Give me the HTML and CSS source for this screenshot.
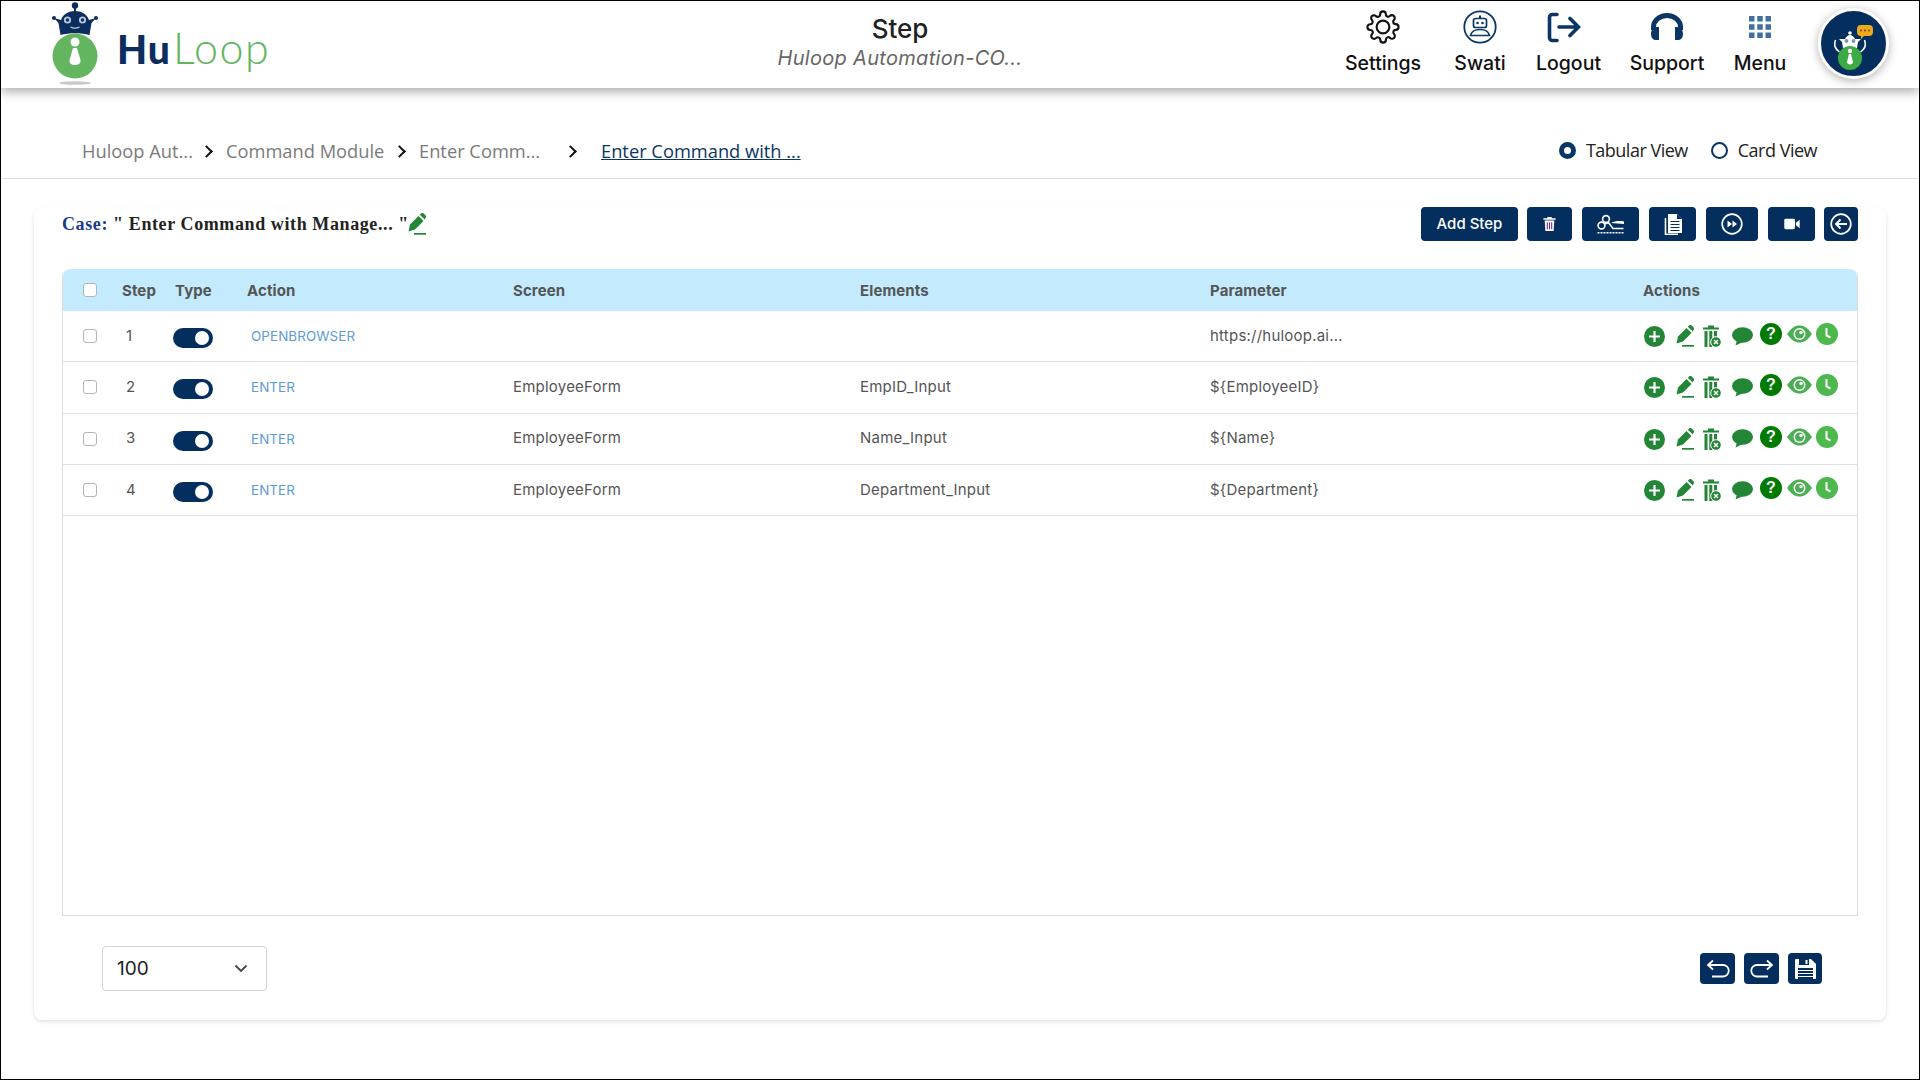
FILE: index.html
```html
<!DOCTYPE html>
<html lang="en">
<head>
<meta charset="utf-8">
<title>Step</title>
<link rel="stylesheet" href="styles.css">
</head>
<body>
<svg class="defs" aria-hidden="true">
  <symbol id="i-plus" viewBox="0 0 21 21"><circle cx="10.5" cy="10.5" r="10.5" fill="#238636"/><path d="M10.5 5v11M5 10.5h11" stroke="#fff" stroke-width="2.2"/></symbol>
  <symbol id="i-pen" viewBox="0 0 18 22"><path d="M.5 18.500 2 11.500 10.500 3l5 5L7 16.500z" fill="#238636"/><path d="M11.800 1.800 13 .6a2 2 0 0 1 2.800 0l1.600 1.600a2 2 0 0 1 0 2.800L16.800 6.600z" fill="#238636"/><rect x="6" y="20" width="12" height="1.700" fill="#238636"/></symbol>
  <symbol id="i-trash" viewBox="0 0 18 22"><path d="M5 .5h6v2h5v2H0v-2h5z" fill="#238636"/><path d="M1.500 6h3v16h-3zM6.300 6h3v16h-3zM11 6h3v7h-3z" fill="#238636"/><circle cx="13" cy="17" r="5.300" fill="#238636" stroke="#fff"/><path d="m11 15 4 4m0-4-4 4" stroke="#fff" stroke-width="1.500"/></symbol>
  <symbol id="i-chat" viewBox="0 0 21 19"><ellipse cx="10.500" cy="8" rx="10.500" ry="7.800" fill="#238636"/><path d="M5 13 3.500 18.500 11 15z" fill="#238636"/></symbol>
  <symbol id="i-eye" viewBox="0 0 25 18"><path d="M0 9C4 3 8 .5 12.500.5S21 3 25 9c-4 6-8 8.500-12.500 8.500S4 15 0 9z" fill="#4cae54"/><circle cx="12.500" cy="9" r="6" fill="#fff"/><circle cx="12.500" cy="9" r="4.500" fill="#4cae54"/><circle cx="14" cy="7.500" r="1.700" fill="#fff"/></symbol>
  <symbol id="i-clock" viewBox="0 0 22 22"><circle cx="11" cy="11" r="11" fill="#4db84e"/><path d="M10.500 5v7.500l4 2" fill="none" stroke="#fff" stroke-width="2"/></symbol>
</svg>
<div class="page">
  <header class="topbar">
    <a class="brand">
      <svg class="brand-mark" viewBox="0 0 50 85" aria-hidden="true">
        <circle cx="25" cy="4.500" r="3.200" fill="#0c2e5e"/><rect x="24" y="6" width="2" height="5" fill="#0c2e5e"/>
        <circle cx="4" cy="17" r="2" fill="#0c2e5e"/><circle cx="46" cy="17" r="2" fill="#0c2e5e"/>
        <path d="M4 17l7 2c2-6 8-9 14-9s12 3 14 9l7-2-4.500 5L39.500 34C31 31.500 19 31.500 10.500 34L8.500 22z" fill="#0c2e5e"/>
        <circle cx="17.500" cy="19" r="3.600" fill="#b9c6d8"/><circle cx="32.500" cy="19" r="3.600" fill="#b9c6d8"/>
        <circle cx="17.500" cy="19" r="1.700" fill="#0c2e5e"/><circle cx="32.500" cy="19" r="1.700" fill="#0c2e5e"/>
        <path d="M20.500 26c3 1.500 6 1.500 9 0" fill="none" stroke="#b9c6d8" stroke-width="1.300"/>
        <circle cx="25" cy="55" r="22.500" fill="#63b560"/>
        <circle cx="25" cy="41" r="4.500" fill="#fff"/>
        <path d="M23 47h4l3.500 12c.5 3-2 5-5.500 5s-6-2-5.500-5z" fill="#fff"/>
        <ellipse cx="25" cy="82" rx="16" ry="1.800" fill="#c9c9c9"/>
      </svg>
      <span class="brand-name"><b>Hu</b><span>Loop</span></span>
    </a>
    <div class="title">
      <h1>Step</h1>
      <p>Huloop Automation-CO...</p>
    </div>
    <nav class="nav">
      <a class="nav-item w-settings">
        <svg class="nav-icon" viewBox="0 0 24 24" fill="none" stroke="#111" stroke-width="1.500"><circle cx="12" cy="12" r="4.500"/><path d="M19.400 15a1.650 1.650 0 0 0 .33 1.820l.06.06a2 2 0 0 1 0 2.830 2 2 0 0 1-2.830 0l-.06-.06a1.650 1.650 0 0 0-1.820-.33 1.650 1.650 0 0 0-1 1.510V21a2 2 0 0 1-2 2 2 2 0 0 1-2-2v-.09A1.650 1.650 0 0 0 9 19.400a1.650 1.650 0 0 0-1.820.33l-.06.06a2 2 0 0 1-2.830 0 2 2 0 0 1 0-2.830l.06-.06a1.650 1.650 0 0 0 .33-1.820 1.650 1.650 0 0 0-1.510-1H3a2 2 0 0 1-2-2 2 2 0 0 1 2-2h.09A1.650 1.650 0 0 0 4.600 9a1.650 1.650 0 0 0-.33-1.820l-.06-.06a2 2 0 0 1 0-2.830 2 2 0 0 1 2.830 0l.06.06a1.650 1.650 0 0 0 1.820.33H9a1.650 1.650 0 0 0 1-1.510V3a2 2 0 0 1 2-2 2 2 0 0 1 2 2v.09a1.650 1.650 0 0 0 1 1.510 1.650 1.650 0 0 0 1.820-.33l.06-.06a2 2 0 0 1 2.830 0 2 2 0 0 1 0 2.830l-.06.06a1.650 1.650 0 0 0-.33 1.820V9a1.650 1.650 0 0 0 1.510 1H21a2 2 0 0 1 2 2 2 2 0 0 1-2 2h-.09a1.650 1.650 0 0 0-1.510 1z"/></svg>
        <span>Settings</span>
      </a>
      <a class="nav-item w-swati">
        <svg class="nav-icon" viewBox="0 0 34 34" fill="none"><circle cx="17" cy="17" r="15.700" stroke="#0b3564" stroke-width="1.800"/><rect x="10.500" y="8.500" width="13" height="9" rx="2" stroke="#0b3564" stroke-width="1.700"/><rect x="16" y="5.500" width="2" height="3" fill="#0b3564"/><circle cx="14.500" cy="13" r="1.300" fill="#0b3564"/><circle cx="19.500" cy="13" r="1.300" fill="#0b3564"/><path d="M7.500 25.500C8.500 21 12 19.500 17 19.500s8.500 1.500 9.500 6z" stroke="#0b3564" stroke-width="1.700"/></svg>
        <span>Swati</span>
      </a>
      <a class="nav-item w-logout">
        <svg class="nav-icon nudge-left" viewBox="0 0 34 34" fill="none" stroke="#0b3564" stroke-width="3.600" stroke-linecap="round"><path d="M10 4.500H5.500a3 3 0 0 0-3 3v20a3 3 0 0 0 3 3H10"/><path d="M12 17h19M23 8.500 31.500 17 23 25.500"/></svg>
        <span>Logout</span>
      </a>
      <a class="nav-item w-support">
        <svg class="nav-icon" viewBox="0 0 34 34"><path d="M3.500 20v-3a13.500 11.500 0 0 1 27 0v3" fill="none" stroke="#0b3564" stroke-width="5"/><path d="M1 24c0-4 2.500-7 5-7h3v13H6c-2.500 0-5-2-5-6zM33 24c0-4-2.500-7-5-7h-3v13h3c2.500 0 5-2 5-6z" fill="#0b3564"/></svg>
        <span>Support</span>
      </a>
      <a class="nav-item w-menu">
        <svg class="nav-icon" viewBox="0 0 34 34" fill="#40709f"><rect x="6" y="6" width="5.500" height="5.500"/><rect x="14.250" y="6" width="5.500" height="5.500"/><rect x="22.500" y="6" width="5.500" height="5.500"/><rect x="6" y="14.250" width="5.500" height="5.500"/><rect x="14.250" y="14.250" width="5.500" height="5.500"/><rect x="22.500" y="14.250" width="5.500" height="5.500"/><rect x="6" y="22.500" width="5.500" height="5.500"/><rect x="14.250" y="22.500" width="5.500" height="5.500"/><rect x="22.500" y="22.500" width="5.500" height="5.500"/></svg>
        <span>Menu</span>
      </a>
      <div class="avatar">
        <svg viewBox="0 0 65 65" aria-hidden="true">
          <path d="M40 14h8a4 4 0 0 1 4 4v3a4 4 0 0 1-4 4h-5l-3 3v-3a4 4 0 0 1-4-4v-3a4 4 0 0 1 4-4z" fill="#eea81c"/>
          <circle cx="40" cy="19.500" r="1" fill="#6b4a00"/><circle cx="44" cy="19.500" r="1" fill="#6b4a00"/><circle cx="48" cy="19.500" r="1" fill="#6b4a00"/>
          <circle cx="29" cy="22" r="1.800" fill="#fff"/><path d="M18 28h6c1-2 3-4 5-4s4 2 5 4h6l-3 3-1 6H22l-1-6z" fill="#fff"/>
          <circle cx="25.500" cy="30" r="1.900" fill="#7d95b5"/><circle cx="32.500" cy="30" r="1.900" fill="#7d95b5"/>
          <path d="M14.500 29c-2 5-1 8 4 12M43.500 29c2 5 1 8-4 12" fill="none" stroke="#fff" stroke-width="1.600"/>
          <circle cx="29" cy="47" r="12" fill="#3cab44"/>
          <circle cx="29" cy="40" r="2.200" fill="#fff"/><path d="M28 43h2l2 8c0 1.500-1.300 2.500-3 2.500s-3-1-3-2.500z" fill="#fff"/>
        </svg>
      </div>
    </nav>
  </header>

  <div class="crumbbar">
    <ol class="crumbs">
      <li class="c1">Huloop Aut...</li>
      <li class="c2">Command Module</li>
      <li class="c3">Enter Comm...</li>
      <li class="c4"><a>Enter Command with ...</a></li>
    </ol>
    <div class="views">
      <label class="radio is-on"><i></i>Tabular View</label>
      <label class="radio"><i></i>Card View</label>
    </div>
  </div>

  <main class="card">
    <div class="toolbar">
      <h2 class="case"><span>Case:</span> " Enter Command with Manage... "<svg class="case-pen"><use href="#i-pen"/></svg></h2>
      <div class="actions">
        <button class="btn btn-add">Add Step</button>
        <button class="btn b-del"><svg width="13" height="14" viewBox="0 0 14 16"><path d="M4.500 0h5v1.500H14V3H0V1.500h4.500z" fill="#fff"/><path d="M1.500 4h11l-.8 12H2.300z" fill="#fff"/><path d="M4.500 6v8M7 6v8M9.500 6v8" stroke="#7a2f9c" stroke-width="1.300"/></svg></button>
        <button class="btn b-cut"><svg width="28" height="20" viewBox="0 0 28 20" fill="none" stroke="#fff"><circle cx="9" cy="5" r="3.400" stroke-width="1.600"/><circle cx="4.500" cy="11.500" r="3.400" stroke-width="1.600"/><path d="M11 8 16 14.500H26.500M7.500 10 12 8.500" stroke-width="1.600"/><path d="M14 9c4-2 8-2.500 13-1.500V10z" fill="#fff" stroke="none"/><path d="M.5 18.800h27" stroke-width="1.500" stroke-dasharray="2 1"/></svg></button>
        <button class="btn b-doc"><svg width="18" height="21" viewBox="0 0 18 21"><path d="M1.500 4v16.200H14" fill="none" stroke="#fff" stroke-width="1.600"/><path d="M4 0h9l5 5v14H4z" fill="#fff"/><path d="M13 0v5h5z" fill="#042e5e"/><path d="M6.500 7.500h9M6.500 10.500h9M6.500 13.500h9M6.500 16.500h9" stroke="#042e5e" stroke-width="1.100"/></svg></button>
        <button class="btn b-run"><svg width="22" height="22" viewBox="0 0 22 22"><circle cx="11" cy="11" r="9.800" fill="none" stroke="#fff" stroke-width="1.700"/><path d="M6.500 7.500 11 11l-4.500 3.500zM11.500 7.500 16 11l-4.500 3.500z" fill="#fff"/></svg></button>
        <button class="btn b-rec"><svg width="16" height="12" viewBox="0 0 18 14"><rect y="1" width="12.500" height="12" rx="1.500" fill="#fff"/><path d="M13.500 5.500 18 2v10l-4.500-3.500z" fill="#fff"/></svg></button>
        <button class="btn b-back"><svg width="22" height="22" viewBox="0 0 22 22" fill="none" stroke="#fff"><circle cx="11" cy="11" r="9.800" stroke-width="1.700"/><path d="M17 11H6M10.500 6.500 6 11l4.500 4.500" stroke-width="1.800"/></svg></button>
      </div>
    </div>

    <div class="table-wrap">
      <table class="steps">
        <colgroup><col class="c-check"><col class="c-step"><col class="c-type"><col class="c-action"><col class="c-screen"><col class="c-elem"><col class="c-param"><col class="c-acts"></colgroup>
        <thead>
          <tr><th class="cell-check"><input type="checkbox"></th><th>Step</th><th>Type</th><th>Action</th><th>Screen</th><th>Elements</th><th>Parameter</th><th>Actions</th></tr>
        </thead>
        <tbody>
          <tr>
            <td class="cell-check"><input type="checkbox"></td><td class="num">1</td><td class="cell-toggle"><span class="toggle"></span></td><td class="act"><a>OPENBROWSER</a></td><td></td><td></td><td>https://huloop.ai...</td>
            <td class="cell-icons"><div class="icons"><svg class="ic-plus"><use href="#i-plus"/></svg><svg class="ic-pen"><use href="#i-pen"/></svg><svg class="ic-trash"><use href="#i-trash"/></svg><svg class="ic-chat"><use href="#i-chat"/></svg><span class="ic-help">?</span><svg class="ic-eye"><use href="#i-eye"/></svg><svg class="ic-clock"><use href="#i-clock"/></svg></div></td>
          </tr>
          <tr>
            <td class="cell-check"><input type="checkbox"></td><td class="num">2</td><td class="cell-toggle"><span class="toggle"></span></td><td class="act"><a>ENTER</a></td><td>EmployeeForm</td><td>EmpID_Input</td><td>${EmployeeID}</td>
            <td class="cell-icons"><div class="icons"><svg class="ic-plus"><use href="#i-plus"/></svg><svg class="ic-pen"><use href="#i-pen"/></svg><svg class="ic-trash"><use href="#i-trash"/></svg><svg class="ic-chat"><use href="#i-chat"/></svg><span class="ic-help">?</span><svg class="ic-eye"><use href="#i-eye"/></svg><svg class="ic-clock"><use href="#i-clock"/></svg></div></td>
          </tr>
          <tr>
            <td class="cell-check"><input type="checkbox"></td><td class="num">3</td><td class="cell-toggle"><span class="toggle"></span></td><td class="act"><a>ENTER</a></td><td>EmployeeForm</td><td>Name_Input</td><td>${Name}</td>
            <td class="cell-icons"><div class="icons"><svg class="ic-plus"><use href="#i-plus"/></svg><svg class="ic-pen"><use href="#i-pen"/></svg><svg class="ic-trash"><use href="#i-trash"/></svg><svg class="ic-chat"><use href="#i-chat"/></svg><span class="ic-help">?</span><svg class="ic-eye"><use href="#i-eye"/></svg><svg class="ic-clock"><use href="#i-clock"/></svg></div></td>
          </tr>
          <tr>
            <td class="cell-check"><input type="checkbox"></td><td class="num">4</td><td class="cell-toggle"><span class="toggle"></span></td><td class="act"><a>ENTER</a></td><td>EmployeeForm</td><td>Department_Input</td><td>${Department}</td>
            <td class="cell-icons"><div class="icons"><svg class="ic-plus"><use href="#i-plus"/></svg><svg class="ic-pen"><use href="#i-pen"/></svg><svg class="ic-trash"><use href="#i-trash"/></svg><svg class="ic-chat"><use href="#i-chat"/></svg><span class="ic-help">?</span><svg class="ic-eye"><use href="#i-eye"/></svg><svg class="ic-clock"><use href="#i-clock"/></svg></div></td>
          </tr>
        </tbody>
      </table>
    </div>

    <div class="footer">
      <div class="pager"><span>100</span><svg width="14" height="9" viewBox="0 0 14 9" fill="none" stroke="#444" stroke-width="1.800"><path d="M1.500 1.500 7 7l5.500-5.500"/></svg></div>
      <div class="footer-btns">
        <button class="btn b-undo"><svg width="24" height="20" viewBox="0 0 24 20" fill="none" stroke="#fff" stroke-width="1.800"><path d="M7 1.500 2 6l5 4.500M2 6h15a5.500 5.500 0 0 1 0 11.500H6"/></svg></button>
        <button class="btn b-undo"><svg width="24" height="20" viewBox="0 0 24 20" fill="none" stroke="#fff" stroke-width="1.800"><path d="M17 1.500 22 6l-5 4.500M22 6H7a5.500 5.500 0 0 0 0 11.500h11"/></svg></button>
        <button class="btn b-save"><svg width="21" height="20" viewBox="0 0 21 20"><path d="M1 0h15l5 5v14a1 1 0 0 1-1 1H1a1 1 0 0 1-1-1V1a1 1 0 0 1 1-1z" fill="#fff"/><rect x="4" y="0" width="10" height="6" fill="#042e5e"/><rect x="10.500" y="1" width="2" height="4" fill="#fff"/><rect x="3" y="9" width="15" height="11" fill="#042e5e"/><path d="M3 11.500h15M3 14.500h15M3 17.500h15" stroke="#fff" stroke-width="1.200"/></svg></button>
      </div>
    </div>
  </main>
</div>
</body>
</html>
```
FILE: styles.css
```css
* { box-sizing: border-box; }
html, body { margin: 0; padding: 0; }
body { font-family: Inter, "Noto Sans", sans-serif; color: #222; background: #fff; }
.defs { position: absolute; width: 0; height: 0; }
.page { width: 1920px; height: 1080px; border: 1px solid #000; background: #fff; overflow: hidden; }

/* header */
.topbar { height: 87px; display: flex; align-items: flex-start; background: #fff; box-shadow: 0 4px 10px rgba(0, 0, 0, .32); position: relative; }
.brand { width: 699px; padding-left: 49px; display: flex; align-items: flex-start; }
.brand-mark { width: 50px; height: 85px; flex: none; }
.brand-name { margin: 23px 0 0 17px; font-family: Lato, sans-serif; font-size: 43px; line-height: 48px; letter-spacing: 1.500px; color: #63b560; }
.brand-name b { color: #0c2e5e; font-size: 39px; font-weight: 900; letter-spacing: 1px; }
.brand-name span { font-weight: 300; margin-left: 2px; }
.title { width: 400px; text-align: center; }
.title h1 { margin: 13px 0 0; font-size: 26px; line-height: 30px; font-weight: 500; color: #222; }
.title p { margin: 1px 0 0; font-size: 20px; line-height: 26px; font-style: italic; color: #666; letter-spacing: .3px; }
.nav { margin-left: auto; display: flex; align-items: flex-start; padding-right: 30px; gap: 32px; }
.nav-item { display: flex; flex-direction: column; align-items: center; color: #111; font-size: 19.500px; font-weight: 500; line-height: 26px; white-space: nowrap; }
.nav-item span { margin-top: 6px; }
.nav-icon { width: 34px; height: 34px; margin-top: 9px; flex: none; }
.nudge-left { margin-left: -10px; }
.w-settings { width: 78px; } .w-swati { width: 52px; } .w-logout { width: 61px; } .w-support { width: 72px; } .w-menu { width: 50px; }
.avatar { width: 71px; height: 71px; margin: 7px 0 0 1px; border-radius: 50%; background: #042e5e; border: 3px solid #fff; box-shadow: 0 2px 10px rgba(0, 0, 0, .3); display: flex; }
.avatar svg { width: 100%; height: 100%; }

/* breadcrumb */
.crumbbar { height: 91px; padding: 34px 102px 0 81px; display: flex; justify-content: space-between; align-items: center; border-bottom: 1px solid #ddd; font-family: "Open Sans", sans-serif; font-size: 18.300px; }
.crumbs { list-style: none; display: flex; margin: 0; padding: 0; color: #7a7a7a; }
.crumbs li { white-space: nowrap; position: relative; }
.crumbs li + li::before { content: ""; position: absolute; top: 9px; width: 7px; height: 7px; border-top: 2px solid #111; border-right: 2px solid #111; transform: rotate(45deg); }
.c1 { width: 144px; } .c2 { width: 193px; } .c2::before { left: -24px; } .c3 { width: 182px; } .c3::before { left: -24px; } .c4::before { left: -35px; }
.crumbs a { color: #0b3564; text-decoration: underline; }
.views { display: flex; gap: 23px; color: #222; font-size: 18px; letter-spacing: -.5px; }
.radio { display: flex; align-items: center; gap: 10px; }
.radio i { width: 17px; height: 17px; border-radius: 50%; border: 2px solid #0b3564; }
.radio.is-on i { border: 5px solid #0b3564; }

/* card */
.card { margin: 28px 33px 0; height: 813px; padding: 0 28px; background: #fff; border-radius: 8px; box-shadow: 0 2px 4px rgba(0, 0, 0, .12); }
.toolbar { display: flex; justify-content: space-between; align-items: center; height: 34px; margin-bottom: 28px; }
.case { margin: 0; display: flex; align-items: center; font-family: "Liberation Serif", serif; font-size: 18px; font-weight: 700; color: #222; letter-spacing: .6px; white-space: pre; }
.case span { color: #20398a; }
.case-pen { width: 18px; height: 22px; margin-left: -1px; }
.actions { display: flex; gap: 10px; }
.btn { height: 34px; border: 0; border-radius: 4px; background: #042e5e; color: #fff; padding: 0; display: flex; align-items: center; justify-content: center; font-family: inherit; font-size: 15px; font-weight: 500; }
.btn-add { width: 97px; margin-right: -1px; padding-bottom: 2px; } .b-del { width: 45px; } .b-cut { width: 57px; } .b-doc { width: 47px; } .b-run { width: 52px; } .b-rec { width: 47px; margin-right: -1px; } .b-back { width: 34px; }

/* table */
.table-wrap { height: 647px; border: 1px solid #ddd; border-top: 0; border-radius: 8px 8px 0 0; }
.steps { width: 100%; table-layout: fixed; border-collapse: separate; border-spacing: 0; font-size: 15px; letter-spacing: .22px; color: #555; }
.c-check { width: 49px; } .c-step { width: 53px; } .c-type { width: 72px; } .c-action { width: 266px; } .c-screen { width: 347px; } .c-elem { width: 350px; } .c-param { width: 433px; } .c-acts { width: auto; }
.steps thead th { height: 42px; background: #c3ebfd; text-align: left; padding: 0 0 0 10px; font-size: 15px; font-weight: 700; letter-spacing: .1px; color: #555; }
.steps thead th:first-child { border-top-left-radius: 8px; }
.steps thead th:last-child { border-top-right-radius: 8px; }
.steps td { height: 51.3px; padding: 0 0 2px 10px; border-bottom: 1px solid #dde1e6; white-space: nowrap; }
.steps .cell-check { padding: 0 0 0 20px; }
.steps input { appearance: none; display: block; margin: 0; width: 14px; height: 14px; background: #fff; border: 1px solid #b5b5b5; border-radius: 3px; }
.steps .num { padding-left: 14px; }
.steps .cell-toggle { padding: 0 0 0 8px; }
.steps .act { padding: 0 0 0 14px; font-size: 13.400px; letter-spacing: .1px; }
.act a { color: #5b9bd8; }
.toggle { display: block; width: 40px; height: 20px; margin-top: 4px; border-radius: 10px; background: #042e5e; position: relative; }
.toggle::after { content: ""; position: absolute; right: 4px; top: 3px; width: 14px; height: 14px; border-radius: 50%; background: #fff; }
.steps .cell-icons { padding: 0 0 0 10px; }
.icons { display: flex; align-items: center; }
.icons svg { flex: none; }
.ic-plus { width: 21px; height: 21px; margin-left: .5px; margin-top: 1px; }
.ic-pen { width: 18px; height: 22px; margin-left: 11.5px; }
.ic-trash { width: 18px; height: 22px; margin-left: 9px; }
.ic-chat { width: 21px; height: 19px; margin-left: 11px; }
.ic-help { flex: none; width: 22px; height: 22px; margin-left: 7px; margin-top: -4px; border-radius: 50%; background: #007a00; color: #fff; font-family: "Liberation Sans", sans-serif; font-size: 16px; font-weight: 700; line-height: 22px; text-align: center; letter-spacing: 0; }
.ic-eye { width: 25px; height: 18px; margin-left: 5px; margin-top: -4px; }
.ic-clock { width: 22px; height: 22px; margin-left: 4px; margin-top: -4px; }

/* footer */
.footer { display: flex; justify-content: space-between; align-items: center; padding: 30px 36px 0 40px; }
.pager { width: 165px; height: 45px; padding: 0 18px 0 14px; display: flex; justify-content: space-between; align-items: center; border: 1px solid #ced4da; border-radius: 4px; font-size: 19px; color: #222; }
.footer-btns { display: flex; gap: 9px; }
.b-undo { width: 35px; height: 31px; } .b-save { width: 34px; height: 31px; }
```
